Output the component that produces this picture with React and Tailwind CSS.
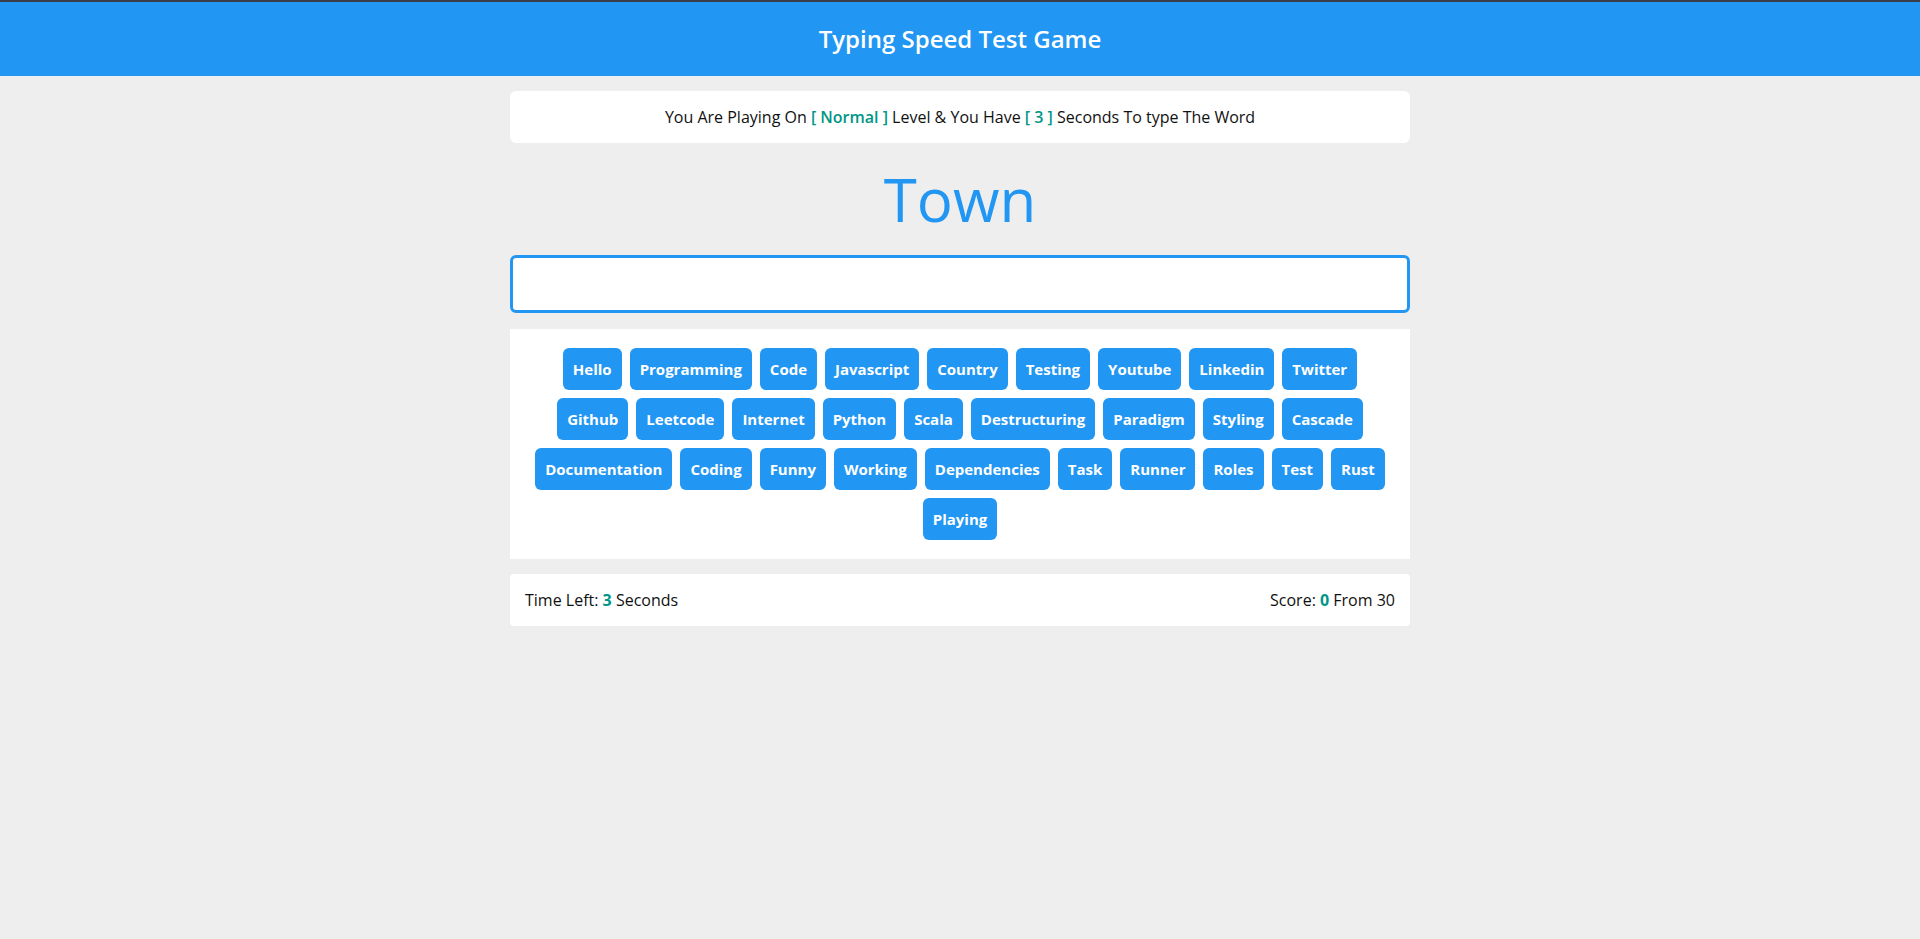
import React from 'react';

const words = [
  'Hello', 'Programming', 'Code', 'Javascript', 'Country', 'Testing', 'Youtube', 'Linkedin', 'Twitter',
  'Github', 'Leetcode', 'Internet', 'Python', 'Scala', 'Destructuring', 'Paradigm', 'Styling', 'Cascade',
  'Documentation', 'Coding', 'Funny', 'Working', 'Dependencies', 'Task', 'Runner', 'Roles', 'Test', 'Rust',
  'Playing',
];

export default function App() {
  return (
    <div className="min-h-[939px] bg-[#eeeeee] text-[#111] font-['Open_Sans',sans-serif]">
      <div className="h-[2px] bg-[#3b3d47]" />
      <header className="h-[74px] bg-[#2196f3] flex items-center justify-center">
        <h1 className="text-white text-[24px] font-semibold">Typing Speed Test Game</h1>
      </header>

      <main className="w-[900px] mx-auto">
        <div className="mt-[15px] bg-white rounded-md py-[14px] text-center text-base leading-6">
          You Are Playing On <span className="text-[#009688] font-semibold">[ Normal ]</span> Level &amp; You Have{' '}
          <span className="text-[#009688] font-semibold">[ 3 ]</span> Seconds To type The Word
        </div>

        <div className="mt-[11px] text-center text-[60px] leading-[90px] text-[#2196f3]">Town</div>

        <input
          type="text"
          className="block mt-[11px] w-full h-[58px] bg-white border-[3px] border-[#2196f3] rounded-md outline-none px-3"
        />

        <div className="mt-4 bg-white px-[15px] py-[15px] flex flex-wrap justify-center">
          {words.map((w) => (
            <span
              key={w}
              className="m-1 px-[10px] py-[9px] bg-[#2196f3] text-white font-bold text-[15px] leading-[24px] rounded-md"
            >
              {w}
            </span>
          ))}
        </div>

        <div className="mt-[15px] bg-white rounded-sm px-[15px] py-[14px] flex justify-between text-base leading-6">
          <div>
            Time Left: <span className="text-[#009688] font-bold">3</span> Seconds
          </div>
          <div>
            Score: <span className="text-[#009688] font-bold">0</span> From 30
          </div>
        </div>
      </main>
    </div>
  );
}
